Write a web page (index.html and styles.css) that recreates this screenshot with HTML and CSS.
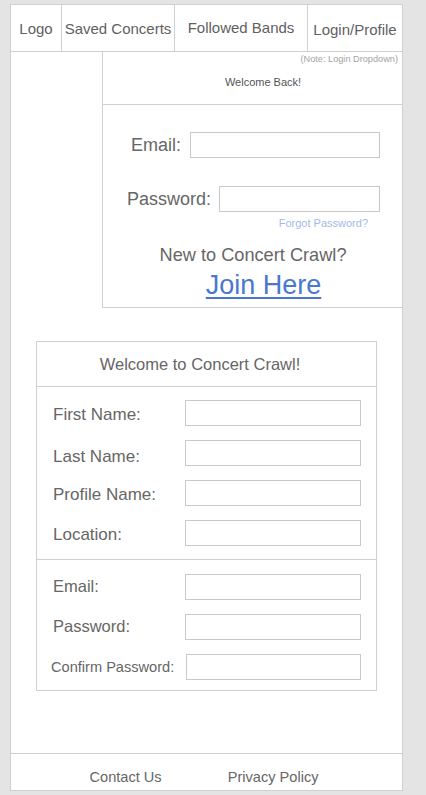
FILE: index.html
```
<!DOCTYPE html>
<html lang="en">
<head>
<meta charset="utf-8">
<title>Concert Crawl</title>
<link rel="stylesheet" href="styles.css">
</head>
<body>
<div class="frame">
  <nav class="nav">
    <div class="nav-item logo">Logo</div>
    <div class="nav-item saved">Saved Concerts</div>
    <div class="nav-item bands">Followed Bands</div>
    <div class="nav-item login">Login/Profile</div>
  </nav>

  <section class="dropdown">
    <div class="dd-head">
      <div class="note">(Note: Login Dropdown)</div>
      <div class="welcome-back">Welcome Back!</div>
    </div>
    <div class="dd-body">
      <div class="login-row row-email">
        <label class="login-label">Email:</label>
        <div class="field field-email"></div>
      </div>
      <div class="login-row row-pass">
        <label class="login-label">Password:</label>
        <div class="field field-pass"></div>
      </div>
      <div class="forgot">Forgot Password?</div>
      <div class="new-to">New to Concert Crawl?</div>
      <a class="join" href="#">Join Here</a>
    </div>
  </section>

  <section class="register">
    <div class="reg-head">Welcome to Concert Crawl!</div>
    <div class="reg-section first">
      <div class="reg-row"><span class="reg-label">First Name:</span><div class="field reg-field"></div></div>
      <div class="reg-row"><span class="reg-label low">Last Name:</span><div class="field reg-field"></div></div>
      <div class="reg-row"><span class="reg-label">Profile Name:</span><div class="field reg-field"></div></div>
      <div class="reg-row"><span class="reg-label">Location:</span><div class="field reg-field"></div></div>
    </div>
    <div class="reg-section second">
      <div class="reg-row"><span class="reg-label mid">Email:</span><div class="field reg-field"></div></div>
      <div class="reg-row"><span class="reg-label mid">Password:</span><div class="field reg-field"></div></div>
      <div class="reg-row"><span class="reg-label small">Confirm Password:</span><div class="field reg-field confirm"></div></div>
    </div>
  </section>

  <footer class="footer">
    <span class="foot-link">Contact Us</span>
    <span class="foot-link">Privacy Policy</span>
  </footer>
</div>
</body>
</html>
```
FILE: styles.css
```
* { box-sizing: border-box; }

html, body {
  margin: 0;
  padding: 0;
  background: #e4e4e4;
}

body {
  font-family: "Liberation Sans", Arial, sans-serif;
  color: #666666;
}

.frame {
  margin: 4px 0 0 10px;
  width: 393px;
  height: 787px;
  background: #ffffff;
  border: 1px solid #d0d0d0;
  display: flex;
  flex-direction: column;
}

/* nav */
.nav {
  display: flex;
  height: 47px;
  border-bottom: 1px solid #cfcfcf;
  flex: none;
}
.nav-item {
  display: flex;
  align-items: center;
  justify-content: center;
  font-size: 15px;
  color: #5f5f5f;
  border-right: 1px solid #cfcfcf;
  white-space: nowrap;
}
.logo { width: 51px; }
.saved { width: 113px; }
.bands { width: 133px; padding-bottom: 2px; }
.login { width: 94px; border-right: none; padding-top: 2px; }

/* dropdown */
.dropdown {
  margin-left: 91px;
  border-left: 1px solid #cfcfcf;
  border-bottom: 1px solid #cfcfcf;
  flex: none;
}
.dd-head {
  height: 53px;
  border-bottom: 1px solid #cfcfcf;
  padding-top: 2px;
}
.note {
  text-align: right;
  font-size: 9.2px;
  color: #a3a3a3;
  padding-right: 4px;
  line-height: 11px;
}
.welcome-back {
  text-align: center;
  font-size: 11px;
  color: #555555;
  margin-top: 11px;
  padding-left: 21px;
  line-height: 13px;
}
.dd-body {
  height: 202px;
  padding-top: 27px;
  display: flex;
  flex-direction: column;
}
.login-row {
  display: flex;
  align-items: center;
  justify-content: flex-end;
  padding-right: 22px;
  gap: 8px;
}
.row-email { gap: 9px; }
.row-pass { margin-top: 28px; }
.login-label {
  font-size: 18px;
  color: #666666;
}
.field {
  height: 26px;
  border: 1px solid #c9c9c9;
  background: #fff;
}
.field-email { width: 190px; }
.field-pass { width: 161px; }
.forgot {
  align-self: flex-end;
  margin-right: 34px;
  margin-top: 5px;
  font-size: 11px;
  color: #a4b9e8;
  line-height: 13px;
}
.new-to {
  text-align: center;
  font-size: 18.2px;
  color: #666666;
  margin-top: 15px;
  line-height: 21px;
  padding-left: 1px;
}
.join {
  align-self: center;
  font-size: 27px;
  color: #4a77d0;
  line-height: 30px;
  margin-top: 4px;
  margin-left: 22px;
  text-decoration: underline;
  text-decoration-thickness: 1.5px;
  text-underline-offset: 3px;
}

/* registration */
.register {
  margin: 33px 0 0 25px;
  width: 341px;
  border: 1px solid #cfcfcf;
  flex: none;
}
.reg-head {
  height: 45px;
  border-bottom: 1px solid #cfcfcf;
  display: flex;
  align-items: center;
  justify-content: center;
  padding-right: 13px;
  font-size: 16.5px;
  color: #666666;
}
.reg-section {
  display: flex;
  flex-direction: column;
  gap: 14px;
  padding-left: 16px;
}
.reg-section.first {
  padding-top: 13px;
  padding-bottom: 13px;
  border-bottom: 1px solid #cfcfcf;
}
.reg-section.second {
  padding-top: 14px;
  padding-bottom: 10px;
}
.reg-row {
  display: grid;
  grid-template-columns: 132px 176px;
  align-items: center;
  height: 26px;
}
.reg-label {
  font-size: 17px;
  line-height: 18px;
  color: #666666;
  white-space: nowrap;
  padding-top: 4px;
}
.reg-label.low { padding-top: 7px; }
.reg-label.mid { font-size: 16.5px; padding-top: 0; padding-bottom: 3px; }
.reg-label.small { font-size: 14.6px; margin-left: -2px; padding-top: 0; }
.reg-field { width: 176px; }
.reg-field.confirm { margin-left: 1px; width: 175px; }

/* footer */
.footer {
  margin-top: auto;
  height: 37px;
  border-top: 1px solid #cfcfcf;
  display: flex;
  align-items: center;
  justify-content: center;
  gap: 66px;
  padding: 9px 5px 0 0;
  flex: none;
}
.foot-link {
  font-size: 14.6px;
  color: #666666;
}
```
